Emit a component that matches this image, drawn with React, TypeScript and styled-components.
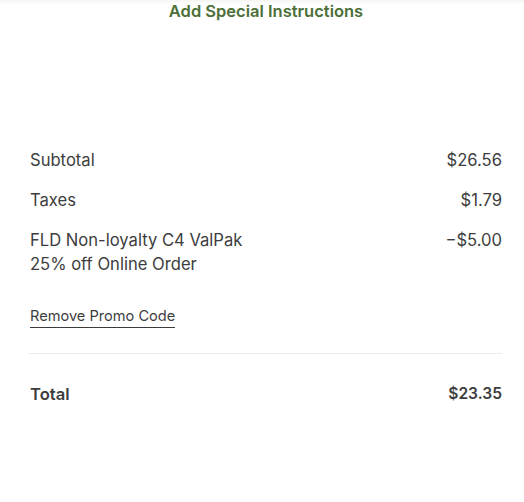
import React from "react";
import styled, { createGlobalStyle } from "styled-components";

const Global = createGlobalStyle`
  html, body { margin: 0; padding: 0; background: #ffffff; }
  body { font-family: Inter, "Liberation Sans", sans-serif; color: #3b3b3b; }
`;

const Page = styled.div`
  width: 524px;
  height: 502px;
  overflow: hidden;
  display: flex;
  flex-direction: column;
  background: #fff;
`;

const TopBar = styled.div`
  display: flex;
  justify-content: center;
  padding: 0 0 0 8px;
  height: 23px;
  background: linear-gradient(#f4f4f2 0px, #ffffff 4px);
`;

const LinkButton = styled.button`
  border: none;
  background: transparent;
  padding: 0;
  font-family: inherit;
  font-size: 16.5px;
  font-weight: 600;
  line-height: 19px;
  color: #4b6f37;
  cursor: pointer;
`;

const Summary = styled.div`
  display: flex;
  flex-direction: column;
  padding: 125px 22px 0 30px;
`;

const Row = styled.div`
  display: flex;
  justify-content: space-between;
  align-items: flex-start;
  font-size: 16.6px;
  line-height: 24px;
  margin-bottom: 16px;
`;

const Label = styled.div<{ $bold?: boolean }>`
  font-weight: ${(p) => (p.$bold ? 600 : 400)};
  color: #3d3d3d;
`;

const Value = styled.div<{ $bold?: boolean }>`
  text-align: right;
  font-weight: ${(p) => (p.$bold ? 600 : 400)};
  color: #3d3d3d;
  font-size: ${(p) => (p.$bold ? "15.6px" : "inherit")};
`;

const PromoLink = styled.button`
  align-self: flex-start;
  border: none;
  background: transparent;
  padding: 0 0 1px;
  margin-top: 14px;
  font-family: inherit;
  font-size: 14.6px;
  line-height: 20px;
  color: #3d3d3d;
  border-bottom: 1px solid #3b3b3b;
  cursor: pointer;
`;

const Divider = styled.hr`
  border: none;
  border-top: 1px solid #ebebeb;
  margin: 25px 0 28px -2px;
`;

export default function App() {
  return (
    <Page>
      <Global />
      <TopBar>
        <LinkButton>Add Special Instructions</LinkButton>
      </TopBar>
      <Summary>
        <Row>
          <Label>Subtotal</Label>
          <Value>$26.56</Value>
        </Row>
        <Row>
          <Label>Taxes</Label>
          <Value>$1.79</Value>
        </Row>
        <Row>
          <Label>
            FLD Non-loyalty C4 ValPak
            <br />
            25% off Online Order
          </Label>
          <Value>−$5.00</Value>
        </Row>
        <PromoLink>Remove Promo Code</PromoLink>
        <Divider />
        <Row>
          <Label $bold>Total</Label>
          <Value $bold>$23.35</Value>
        </Row>
      </Summary>
    </Page>
  );
}
